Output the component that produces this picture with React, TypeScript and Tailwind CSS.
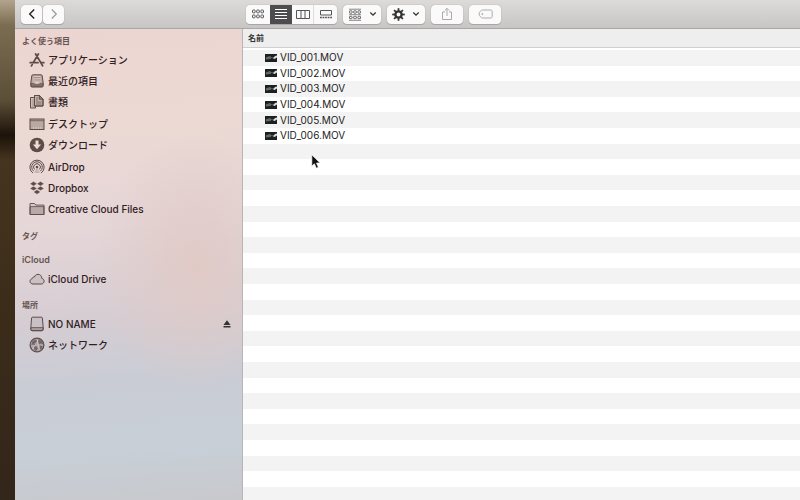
import type { ReactNode } from 'react'
import { clsx } from 'clsx'

interface SidebarItem {
    label: string
    icon: ReactNode
    ejectable?: boolean
}

interface SidebarSection {
    title: string
    items: SidebarItem[]
}

const FILES = ['VID_001.MOV', 'VID_002.MOV', 'VID_003.MOV', 'VID_004.MOV', 'VID_005.MOV', 'VID_006.MOV']
const ROW_COUNT = 30

function Icon({ children }: { children: ReactNode }) {
    return (
        <svg viewBox="0 0 16 16" className="size-4 shrink-0" fill="none" stroke="currentColor" aria-hidden="true">
            {children}
        </svg>
    )
}

const applicationsIcon = (
    <Icon>
        <path d="M9.4 2 4.4 10.4M6.600 2l5.800 9.600 1.200 2.200M3.200 12.600l-.8 1.300" strokeWidth="1.8" strokeLinecap="round" />
        <path d="M1.200 10.700h7.800M12.400 10.700h2.400" strokeWidth="1.800" strokeLinecap="round" />
    </Icon>
)

const recentsIcon = (
    <Icon>
        <path d="M3.9 1.800h8.2c.6 0 1 .3 1.1.9l1 7.300v2.800c0 .8-.4 1.2-1.2 1.2H3c-.8 0-1.2-.4-1.2-1.2V10l1-7.300c.1-.6.5-.9 1.1-.9z" fill="currentColor" fillOpacity=".35" strokeWidth="1" />
        <path d="M4.600 3.200h6.800l.8 6h-2.400l-.8 1.300H7l-.8-1.300H3.800z" fill="#e6d3ce" stroke="none" />
        <path d="M4.600 4.500h6.800M4.400 6.200h7.200M4.200 7.900h7.600" strokeWidth=".5" />
        <path d="M2 10.400h3l.8 1.200h4.400l.8-1.200h3v2.400c0 .6-.3.9-.9.9H2.900c-.6 0-.9-.3-.9-.9z" fill="currentColor" fillOpacity=".6" strokeWidth=".5" />
    </Icon>
)

const documentsIcon = (
    <Icon>
        <path d="M1.500 3.500h5v10.500h-5z" fill="currentColor" fillOpacity=".15" />
        <path d="M2.800 6h2.400M2.800 8h2.400M2.800 10h2.400M2.800 12h2.400" strokeWidth=".5" />
        <path d="M5.500 1.500h5l3.500 3.500v7H5.500z" fill="#e9d5cf" />
        <path d="M5.500 1.500h5l3.500 3.500v7H5.500z" fill="currentColor" fillOpacity=".25" strokeWidth="1" />
        <path d="M10.300 1.500v3.700h3.700" fill="currentColor" fillOpacity=".5" strokeWidth="1" />
        <path d="M7 4h2M7 6h2M7 8h5.500M7 10h5.500" strokeWidth=".7" />
    </Icon>
)

const desktopIcon = (
    <Icon>
        <rect x="1" y="3" width="14" height="10.500" fill="currentColor" fillOpacity=".35" />
        <path d="M1 4.700h14" strokeWidth=".7" />
        <path d="M4 12h1.200M6.400 12h1.200M8.800 12H10M11.200 12h1.200" stroke="#eedbd6" strokeWidth="1.200" />
    </Icon>
)

const downloadsIcon = (
    <Icon>
        <circle cx="8" cy="8" r="7.300" fill="currentColor" stroke="none" />
        <path d="M6.500 3.600h3v4h2.600L8 12.300 3.900 7.600h2.600z" fill="#eedbd6" stroke="none" />
    </Icon>
)

const airdropIcon = (
    <Icon>
        <path d="M4 14.100a7.100 7.100 0 1 1 8 0M4.700 12.200a5.300 5.300 0 1 1 6.600 0M5.500 10.400a3.400 3.400 0 1 1 5 0" strokeWidth="1" />
        <path d="m8 7.700 2.700 6.200H5.300z" fill="currentColor" fillOpacity=".25" stroke="none" />
        <circle cx="8" cy="8" r="1.300" fill="currentColor" stroke="none" />
    </Icon>
)

const dropboxIcon = (
    <Icon>
        <path d="M4.500 1.600 8 3.800 4.500 6 1 3.800zM11.500 1.600 15 3.800 11.500 6 8 3.800zM4.500 6.200 8 8.400l-3.500 2.200L1 8.400zM11.500 6.200 15 8.400l-3.500 2.200L8 8.400zM8 9.700l3.400 2.200L8 14.200l-3.400-2.300z" fill="currentColor" stroke="#ead8d6" strokeWidth=".3" />
    </Icon>
)

const folderIcon = (
    <Icon>
        <path d="M1 13.500v-11h4.600l1.200 1.600H15v9.400z" fill="currentColor" fillOpacity=".1" strokeWidth=".9" />
        <path d="M1 5.600h14v7.900H1z" fill="currentColor" fillOpacity=".25" strokeWidth=".8" />
    </Icon>
)

const cloudIcon = (
    <Icon>
        <path d="M4 13c-1.800 0-3-1.200-3-2.700 0-1.400 1-2.400 2.200-2.600C3.300 6.500 4.300 5.900 5.400 6c.6-1.700 2-2.700 3.600-2.700 2.200 0 3.800 1.700 3.800 4.100 1.400.3 2.300 1.300 2.300 2.700 0 1.700-1.300 2.900-3 2.900z" fill="currentColor" fillOpacity=".12" strokeWidth="1" />
    </Icon>
)

const driveIcon = (
    <Icon>
        <path d="M3.500 1.200h9c.5 0 .8.300.9.800l.8 9.500v2c0 .8-.4 1.200-1.200 1.200H3c-.8 0-1.200-.4-1.200-1.200v-2L2.600 2c.1-.5.400-.8.900-.8z" fill="currentColor" fillOpacity=".1" strokeWidth="1" />
        <path d="M1.900 11.600h12.200v2c0 .7-.4 1.100-1.100 1.100H3c-.7 0-1.100-.4-1.100-1.100z" fill="currentColor" fillOpacity=".3" strokeWidth=".8" />
    </Icon>
)

const networkIcon = (
    <Icon>
        <circle cx="8" cy="8" r="6.900" fill="currentColor" fillOpacity=".3" strokeWidth="1.200" />
        <path d="M3.200 4.500 6 2.500l2 1.100-.8 2-1.700.6.800 2.200-2.300-1-1.700.8zM9.500 2l3.800 2.200 1.200 3.300-2.500-.9-1.800.6-1-1.800zM5 9.200l2.800.4 1 1.700-1.800 3-1.900-1.900zM10.800 8.600l3 .6-1.200 2.800-2.100 1.400z" fill="currentColor" fillOpacity=".7" stroke="none" />
        <path d="m3.500 12 3-4.500M8.500 3l.5 5 2 5" stroke="#e4dfe1" strokeWidth=".6" />
    </Icon>
)

const SECTIONS: SidebarSection[] = [
    {
        title: 'よく使う項目',
        items: [
            { label: 'アプリケーション', icon: applicationsIcon },
            { label: '最近の項目', icon: recentsIcon },
            { label: '書類', icon: documentsIcon },
            { label: 'デスクトップ', icon: desktopIcon },
            { label: 'ダウンロード', icon: downloadsIcon },
            { label: 'AirDrop', icon: airdropIcon },
            { label: 'Dropbox', icon: dropboxIcon },
            { label: 'Creative Cloud Files', icon: folderIcon },
        ],
    },
    { title: 'タグ', items: [] },
    { title: 'iCloud', items: [{ label: 'iCloud Drive', icon: cloudIcon }] },
    {
        title: '場所',
        items: [
            { label: 'NO NAME', icon: driveIcon, ejectable: true },
            { label: 'ネットワーク', icon: networkIcon },
        ],
    },
]

interface ToolbarButtonProps {
    label: string
    active?: boolean
    className?: string
    children: ReactNode
}

function ToolbarButton({ label, active = false, className, children }: ToolbarButtonProps) {
    return (
        <button
            type="button"
            aria-label={label}
            className={clsx(
                'flex h-[19px] items-center justify-center',
                active ? 'bg-[#4d4d4f] text-white' : 'bg-[#fafafa]',
                className
            )}
        >
            {children}
        </button>
    )
}

function ChevronDown() {
    return (
        <svg viewBox="0 0 8 6" className="h-[6px] w-2" fill="none" stroke="#333" strokeWidth="1.300" aria-hidden="true">
            <path d="m1.300 1.500 2.700 2.700 2.700-2.700" />
        </svg>
    )
}

function Toolbar() {
    const standalone = 'rounded-[4px] shadow-[0_0_1px_#00000066,0_1px_0_#00000022]'
    return (
        <header className="flex h-[29px] shrink-0 items-center border-b border-[#a9a7a7] bg-linear-to-b from-[#dcdbda] to-[#c7c6c5] pl-[6px]">
            <nav className="flex w-[225px] shrink-0 gap-px">
                <ToolbarButton label="戻る" className={clsx(standalone, 'w-[21px]')}>
                    <svg viewBox="0 0 10 12" className="h-3 w-[10px]" fill="none" stroke="#222" strokeWidth="1.400">
                        <path d="M7.200 1.500 2.700 6l4.500 4.500" />
                    </svg>
                </ToolbarButton>
                <ToolbarButton label="進む" className={clsx(standalone, 'w-[21px]')}>
                    <svg viewBox="0 0 10 12" className="h-3 w-[10px]" fill="none" stroke="#999" strokeWidth="1.200">
                        <path d="M2.800 1.500 7.300 6l-4.500 4.500" />
                    </svg>
                </ToolbarButton>
            </nav>

            <div className="flex gap-[6px] text-[#555]">
                <div className={clsx('flex overflow-hidden', standalone)}>
                    <ToolbarButton label="アイコン" className="w-6">
                        <svg viewBox="0 0 14 10" className="h-[10px] w-[14px]" fill="none" stroke="currentColor" strokeWidth="1">
                            {[1, 6].map((y) =>
                                [1.5, 5.7, 9.9].map((x) => <rect key={`${x}-${y}`} x={x} y={y} width="2.600" height="2.800" rx=".7" />)
                            )}
                        </svg>
                    </ToolbarButton>
                    <ToolbarButton label="リスト" active className="w-[22px]">
                        <svg viewBox="0 0 14 10" className="h-[10px] w-[14px]" stroke="currentColor" strokeWidth="1">
                            <path d="M1 .5h12M1 3.500h12M1 6.500h12M1 9.500h12" />
                        </svg>
                    </ToolbarButton>
                    <ToolbarButton label="カラム" className="w-[22px] border-r border-[#ddd]">
                        <svg viewBox="0 0 14 10" className="h-[10px] w-[14px]" fill="none" stroke="currentColor" strokeWidth="1">
                            <path d="M.5 1.500h13v8H.5zM5 1.500v8M9 1.500v8" />
                        </svg>
                    </ToolbarButton>
                    <ToolbarButton label="ギャラリー" className="w-[23px]">
                        <svg viewBox="0 0 14 10" className="h-[10px] w-[14px]" fill="none" stroke="currentColor" strokeWidth="1">
                            <path d="M1.500 1.500h11v4.500h-11z" />
                            <path d="M1 8.600h12" strokeWidth="1.500" strokeDasharray="1.800 .75" />
                        </svg>
                    </ToolbarButton>
                </div>

                <ToolbarButton label="グループ" className={clsx(standalone, 'w-[38px] gap-[7px]')}>
                    <svg viewBox="0 0 14 13" className="h-[13px] w-[14px]" fill="none" stroke="currentColor" strokeWidth=".9">
                        <path d="M1 1.200h12M1 6.700h12" strokeWidth=".7" />
                        {[2.8, 8.3].map((y) =>
                            [1.5, 5.7, 9.9].map((x) => <rect key={`${x}-${y}`} x={x} y={y} width="2.600" height="2.400" rx=".6" />)
                        )}
                        <path d="M1 12.300h12" strokeWidth=".7" />
                    </svg>
                    <ChevronDown />
                </ToolbarButton>
                <ToolbarButton label="アクション" className={clsx(standalone, 'w-[38px] gap-[7px]')}>
                    <svg viewBox="0 0 12 12" className="size-[13px]" fill="none" stroke="#333" aria-hidden="true">
                        <circle cx="6" cy="6" r="2.900" strokeWidth="2.200" />
                        {[0, 45, 90, 135, 180, 225, 270, 315].map((angle) => (
                            <path key={angle} d="M6 .2v2.500" strokeWidth="1.600" transform={`rotate(${angle} 6 6)`} />
                        ))}
                    </svg>
                    <ChevronDown />
                </ToolbarButton>
                <ToolbarButton label="共有" className={clsx(standalone, 'w-8 text-[#aaa]')}>
                    <svg viewBox="0 0 12 14" className="h-[14px] w-3" fill="none" stroke="currentColor" strokeWidth="1">
                        <path d="M4 5H1.500v7.500h9V5H8M6 9V1.500M3.700 3.600 6 1.300l2.300 2.300" />
                    </svg>
                </ToolbarButton>
                <ToolbarButton label="タグを編集" className={clsx(standalone, 'w-8 text-[#aaa]')}>
                    <svg viewBox="0 0 15 10" className="h-[10px] w-[15px]" fill="none" stroke="currentColor" strokeWidth="1">
                        <path d="M4.500 1h8.200c.9 0 1.500.6 1.500 1.500v5c0 .9-.6 1.500-1.500 1.500H4.500C3.200 9 1 6.500 1 5s2.200-4 3.500-4z" />
                        <circle cx="4.300" cy="5" r=".6" />
                    </svg>
                </ToolbarButton>
            </div>
        </header>
    )
}

function Sidebar() {
    return (
        <aside className="flex w-[228px] shrink-0 flex-col gap-[7px] border-r border-[#b9b4b6] bg-[radial-gradient(ellipse_100px_130px_at_80%_50%,#e0cac6_0%,#e0cac600_100%),linear-gradient(176deg,#ecd5d0_0%,#ecd9d3_20%,#e5d6d8_42%,#d6cdd3_60%,#c9ccd5_74%,#c8cfd7_88%,#c8c9cd_100%)] pt-[3px]">
            {SECTIONS.map((section) => (
                <section key={section.title}>
                    <h2
                        className={clsx(
                            'flex h-[17px] items-center pl-[7px] leading-none font-semibold text-[#67534f]',
                            section.title === 'iCloud' ? 'text-[9px]' : 'text-[8px]'
                        )}
                    >
                        {section.title}
                    </h2>
                    {section.items.length > 0 && (
                        <ul className={clsx('grid auto-rows-fr', section.items.length === 8 && 'min-h-[171px]')}>
                            {section.items.map((item) => (
                                <li key={item.label} className="flex min-h-[21px] items-center pr-[10px] pl-[14px]">
                                    <a href="#" className="flex h-4 flex-1 items-center gap-[3px] text-[#5d4c4a]">
                                        {item.icon}
                                        <span className="flex h-4 items-center text-[10px] leading-none font-medium text-[#30201f]">
                                            {item.label}
                                        </span>
                                    </a>
                                    {item.ejectable && (
                                        <button type="button" aria-label="取り出す" className="text-[#333]">
                                            <svg viewBox="0 0 10 10" className="size-[10px]" fill="currentColor">
                                                <path d="M5 1.200 8.500 6h-7zM1.500 7h7v1.600h-7z" />
                                            </svg>
                                        </button>
                                    )}
                                </li>
                            ))}
                        </ul>
                    )}
                </section>
            ))}
        </aside>
    )
}

function Thumbnail() {
    return (
        <svg viewBox="0 0 12 8" className="h-2 w-3 shrink-0" aria-hidden="true">
            <path fill="#1d1f20" d="M0 0h12v8H0z" />
            <path fill="#626b68" d="M1 3.300 5 2l2 1.500L5.500 5 1 5.500z" />
            <path fill="#d9dddb" d="m7 3.800 1.800-.2L10 2l2-.5v2L9.500 5z" />
        </svg>
    )
}

function FileList() {
    return (
        <main className="min-w-0 flex-1 overflow-hidden bg-white">
            <table className="block w-full">
                <thead className="block border-b border-[#cfcfcf] bg-[#eeeeee]">
                    <tr className="block">
                        <th className="block pl-[5px] text-left text-[8px] leading-[18px] font-bold text-[#333]">名前</th>
                    </tr>
                </thead>
                <tbody className="mt-[2px] grid min-h-[468px] auto-rows-fr">
                    {Array.from({ length: ROW_COUNT }, (_, i) => (
                        <tr key={i} className="flex min-h-[15px] items-center odd:bg-[#f3f3f3]">
                            <td className="flex items-center gap-[3px] pl-[22px] text-[10px] leading-[15px] text-[#222]">
                                {FILES[i] && (
                                    <>
                                        <Thumbnail />
                                        {FILES[i]}
                                    </>
                                )}
                            </td>
                        </tr>
                    ))}
                </tbody>
            </table>
        </main>
    )
}

export default function App() {
    return (
        <div className="relative flex h-screen overflow-hidden bg-[linear-gradient(180deg,#b3a58d_0%,#7a6d52_5%,#5c4f38_20%,#1d130a_27%,#45341f_32%,#3c2d1a_60%,#33261a_100%)] font-['Inter','Noto_Sans_CJK_JP',sans-serif]">
            <div className="ml-[15px] flex min-w-0 flex-1 flex-col">
                <Toolbar />
                <div className="flex min-h-0 flex-1">
                    <Sidebar />
                    <FileList />
                </div>
            </div>

            {/* Mouse pointer */}
            <svg viewBox="0 0 10 15" className="absolute top-[154px] left-[311px] h-[15px] w-[10px]" aria-hidden="true">
                <path d="M.8.800v11.400l2.600-2.400 1.900 4.400 2.100-.9-1.900-4.300h3.700z" fill="#111" stroke="#fff" strokeWidth=".7" />
            </svg>
        </div>
    )
}
